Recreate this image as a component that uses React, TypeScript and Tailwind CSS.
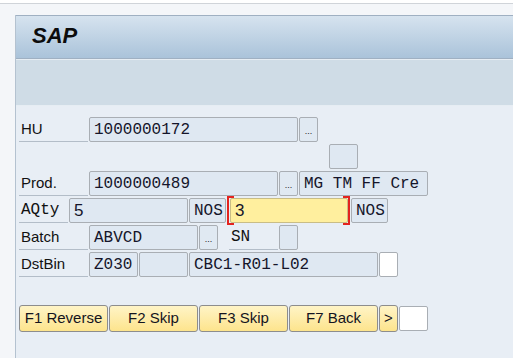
const sans = "font-['Liberation_Sans',Arial,sans-serif]";
const mono = "font-['Liberation_Mono','Courier_New',monospace]";

function Label({ text, w, isMono }: { text: string; w: string; isMono?: boolean }) {
  return (
    <div
      className={`${w} h-full flex items-center pl-[2px] border-b border-[#b3bdc8] text-[#111] ${
        isMono ? `${mono} text-[16px]` : `${sans} text-[15px]`
      }`}
    >
      {text}
    </div>
  );
}

function Field({ text, w, ml = "ml-px", tone = "blue", isMono = true }: { text?: string; w: string; ml?: string; tone?: "blue" | "white"; isMono?: boolean }) {
  return (
    <div
      className={`${w} ${ml} h-full flex items-center pl-[4px] border border-[#a9aeb4] rounded-[2px] whitespace-nowrap overflow-hidden text-[#15152a] ${
        tone === "white" ? "bg-white" : "bg-[#dfe8f2]"
      } ${isMono ? `${mono} text-[16px]` : `${sans} text-[17px]`}`}
    >
      {text}
    </div>
  );
}

function Dots({ ml = "ml-px" }: { ml?: string }) {
  return (
    <div className={`w-[19px] ${ml} h-full flex items-end justify-center pb-[5px] border border-[#a9aeb4] rounded-[2px] bg-[#e0e9f2] text-[9px] leading-none text-[#222] ${sans}`}>
      ...
    </div>
  );
}

function Btn({ text, w, ml = "ml-px" }: { text: string; w: string; ml?: string }) {
  return (
    <div
      className={`${w} ${ml} h-[27px] flex items-center justify-center rounded-[3px] border border-[#8d8d8d] bg-gradient-to-b from-[#fff4c6] to-[#fde48c] text-[15px] text-[#14141e] ${sans}`}
    >
      {text}
    </div>
  );
}

export default function App() {
  return (
    <div className="w-[513px] h-[358px] overflow-hidden bg-white flex flex-col">
      <div className="h-[3px] bg-white" />
      <div className="h-px bg-[#d0d4d9]" />
      <div className="flex-1 flex flex-col bg-[#f4f6f9] pt-[11px] pl-[15px]">
        <div className="flex-1 flex flex-col border-l border-[#b4c2d0]">
          <div className="h-[44px] flex items-center pl-[16px] pb-[3px] border-t border-b border-[#9fb0c2] bg-gradient-to-b from-[#d6e3ef] to-[#aac3da]">
            <span className={`${sans} text-[22px] font-bold italic text-[#0c0c0c]`}>SAP</span>
          </div>
          <div className="h-[47px] bg-[#cfdce6] border-t border-[#e6edf3] border-b border-[#a3b1bf]" />
          <div className="flex-1 bg-[#e8eef5] pl-[3px] pt-[11px] flex flex-col">
            <div className="flex flex-col gap-[2px]">
              <div className="h-[25px] flex">
                <Label text="HU" w="w-[69px]" />
                <Field text="1000000172" w="w-[209px]" />
                <Dots />
              </div>
              <div className="h-[25px] flex">
                <Field w="w-[29px]" ml="ml-[310px]" />
              </div>
              <div className="h-[25px] flex">
                <Label text="Prod." w="w-[69px]" />
                <Field text="1000000489" w="w-[189px]" />
                <Dots />
                <Field text="MG TM FF Cre" w="w-[129px]" />
              </div>
              <div className="h-[25px] flex">
                <Label text="AQty" w="w-[49px]" isMono />
                <Field text="5" w="w-[119px]" isMono={false} />
                <Field text="NOS" w="w-[37px]" />
                <div className="relative w-[118px] ml-[4px] h-full">
                  <div className={`h-full flex items-center pl-[4px] border border-[#c9bd86] rounded-[2px] bg-[#ffef9e] text-[17px] text-[#15152a] ${sans}`}>
                    3
                  </div>
                  <div className="absolute -left-[3px] -top-[2px] -bottom-[2px] w-[7px] border-l-2 border-y-2 border-[#e3231f]" />
                  <div className="absolute -right-[2px] -top-[2px] -bottom-[2px] w-[7px] border-r-2 border-y-2 border-[#e3231f]" />
                </div>
                <Field text="NOS" w="w-[37px]" ml="ml-[3px]" />
              </div>
              <div className="h-[25px] flex">
                <Label text="Batch" w="w-[69px]" />
                <Field text="ABVCD" w="w-[109px]" />
                <Dots />
                <div className="ml-[11px] h-full">
                  <Label text="SN" w="w-[49px]" isMono />
                </div>
                <Field w="w-[19px]" />
              </div>
              <div className="h-[25px] flex">
                <Label text="DstBin" w="w-[69px]" />
                <Field text="Z030" w="w-[49px]" />
                <Field w="w-[49px]" />
                <Field text="CBC1-R01-L02" w="w-[189px]" />
                <Field w="w-[19px]" tone="white" />
              </div>
            </div>
            <div className="mt-[28px] flex items-center">
              <Btn text="F1 Reverse" w="w-[89px]" ml="ml-0" />
              <Btn text="F2 Skip" w="w-[89px]" />
              <Btn text="F3 Skip" w="w-[89px]" />
              <Btn text="F7 Back" w="w-[89px]" />
              <Btn text=">" w="w-[19px]" />
              <div className="w-[29px] h-[25px] ml-px border border-[#a9aeb4] rounded-[2px] bg-white" />
            </div>
          </div>
        </div>
      </div>
    </div>
  );
}
